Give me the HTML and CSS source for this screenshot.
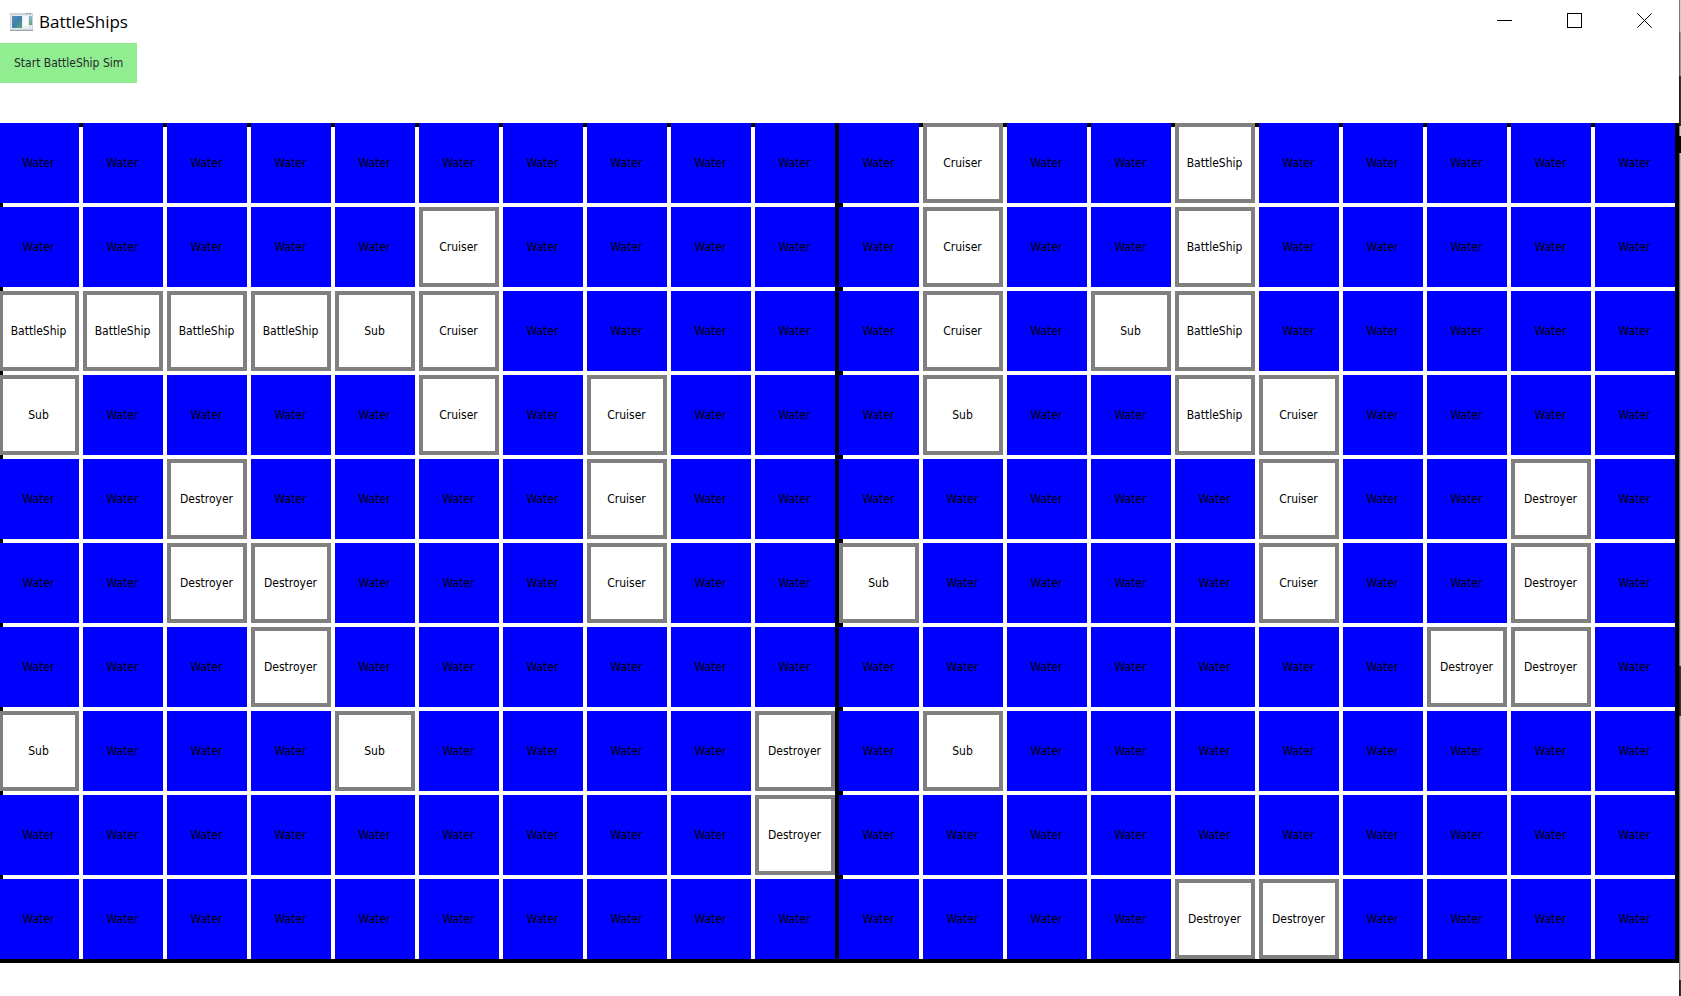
FILE: index.html
```html
<!DOCTYPE html>
<html lang="en">
<head>
<meta charset="utf-8">
<title>BattleShips</title>
<link rel="stylesheet" href="styles.css">
</head>
<body>
<div class="window">
  <header class="titlebar">
    <svg class="app-icon" width="24" height="20" viewBox="0 0 24 20" aria-hidden="true">
      <defs>
        <linearGradient id="pane" x1="0" y1="0" x2="1" y2="1"><stop offset="0" stop-color="#5c8fae"/><stop offset=".5" stop-color="#3f7fae"/><stop offset="1" stop-color="#58a878"/></linearGradient>
        <linearGradient id="bar" x1="0" y1="0" x2="0" y2="1"><stop offset="0" stop-color="#8fb8d8"/><stop offset="1" stop-color="#5fa878"/></linearGradient>
      </defs>
      <rect x="0" y="1" width="23" height="18" fill="#cdd2d8"/>
      <rect x="1" y="3" width="21" height="14" fill="#e6eaef"/>
      <rect x="2" y="4" width="10" height="12" fill="url(#pane)"/>
      <rect x="13" y="4" width="5" height="11" fill="#f6f8fa"/>
      <rect x="19" y="4" width="3" height="9" fill="url(#bar)"/>
      <rect x="16" y="1" width="2" height="1" fill="#8d98a3"/>
      <rect x="19" y="1" width="2" height="1" fill="#8d98a3"/>
      <rect x="0" y="18" width="23" height="1" fill="#9aa8b0"/>
    </svg>
    <h1 class="title">BattleShips</h1>
    <div class="controls">
      <button class="control" type="button" aria-label="Minimize"><svg width="15" height="15" viewBox="0 0 15 15" shape-rendering="crispEdges"><path d="M0 7.5H15"/></svg></button>
      <button class="control" type="button" aria-label="Maximize"><svg width="15" height="15" viewBox="0 0 15 15" shape-rendering="crispEdges"><path d="M.5 .5H14.5V14.5H.5Z"/></svg></button>
      <button class="control" type="button" aria-label="Close"><svg width="15" height="15" viewBox="0 0 15 15"><path d="M.3 .3L14.7 14.7M14.7 .3L.3 14.7"/></svg></button>
    </div>
  </header>
  <div class="toolbar"><button class="start" type="button">Start BattleShip Sim</button></div>
  <main class="boards">
    <section class="board" aria-label="Left board"></section>
    <section class="board" aria-label="Right board"></section>
  </main>
</div>
<div class="desktop"></div>
<script src="app.js"></script>
</body>
</html>
```
FILE: styles.css
```css
* { box-sizing: border-box; }

body {
  margin: 0;
  min-height: 100vh;
  display: flex;
  overflow-x: hidden;
  background: #fff;
  color: #000;
  font: 12px/16px "DejaVu Sans Condensed", "Noto Sans", sans-serif;
}

.window { flex: 1; min-width: 0; }

.titlebar {
  display: flex;
  align-items: center;
  height: 43px;
  padding-left: 10px;
}

.app-icon { flex: none; margin-right: 5px; }

.title {
  margin: 0;
  font: 400 17px/24px "Open Sans", "Noto Sans", sans-serif;
}

.controls { display: flex; margin-left: auto; align-self: stretch; }

.control {
  width: 70px;
  padding: 0 0 2px;
  border: 0;
  background: none;
}

.control svg { display: block; margin: auto; fill: none; stroke: #000; stroke-width: 1; }

.toolbar { height: 80px; }

.start {
  height: 40px;
  padding: 0 14px;
  border: 0;
  background: #90ee90;
  color: #26282a;
  font: inherit;
}

.boards { display: flex; margin-left: -1px; }

.board {
  flex: 1;
  display: grid;
  grid-template-columns: repeat(10, minmax(0, 1fr));
  gap: 4px;
  padding: 0 4px 4px 0;
  box-shadow: inset 0 0 0 4px #000;
}

.cell {
  display: flex;
  align-items: center;
  justify-content: center;
  aspect-ratio: 1;
  padding-right: 1px;
}

.water { background: #00f; }

.ship { background: #fff; border: 4px solid #808080; }

/* Strip of the desktop that shows past the window's right edge */
.desktop {
  width: 2px;
  border-left: 1px solid rgb(0 0 0 / 40%);
  background: linear-gradient(
    #ccc 0 32px, #999 32px 76px, #333 76px 126px, #ccc 126px 136px,
    #000 136px 153px, #bbb 153px 666px, #333 666px 716px, #bbb 716px 980px,
    #333 980px);
}
```
FILE: app.js
```javascript
const NAMES = { ".": "Water", B: "BattleShip", C: "Cruiser", D: "Destroyer", S: "Sub" };

const BOARDS = [
  [
    "..........",
    ".....C....",
    "BBBBSC....",
    "S....C.C..",
    "..D....C..",
    "..DD...C..",
    "...D......",
    "S...S....D",
    ".........D",
    "..........",
  ],
  [
    ".C..B.....",
    ".C..B.....",
    ".C.SB.....",
    ".S..BC....",
    ".....C..D.",
    "S....C..D.",
    ".......DD.",
    ".S........",
    "..........",
    "....DD....",
  ],
];

document.querySelectorAll(".board").forEach((board, i) => {
  for (const code of BOARDS[i].join("")) {
    const cell = document.createElement("div");
    cell.className = code === "." ? "cell water" : "cell ship";
    cell.textContent = NAMES[code];
    board.append(cell);
  }
});
```
